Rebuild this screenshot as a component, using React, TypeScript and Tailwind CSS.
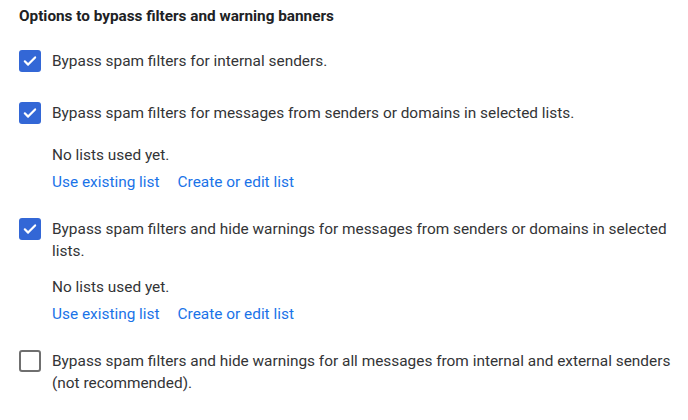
import React, { useState } from 'react';

const font = { fontFamily: 'Roboto, "Liberation Sans", Arial, sans-serif' };

const Checkbox: React.FC<{ checked: boolean; onToggle: () => void }> = ({ checked, onToggle }) => (
    <button
        onClick={onToggle}
        className={`shrink-0 w-[22px] h-[22px] rounded-[3px] flex items-center justify-center ${checked ? 'bg-[#3367d6]' : 'border-2 border-[#6f6f6f] bg-white'}`}
    >
        {checked && (
            <svg width="16" height="16" viewBox="0 0 16 16" fill="none">
                <path d="M2.8 8.3l3.3 3.3 7-7.2" stroke="white" strokeWidth="2.2" strokeLinecap="round" strokeLinejoin="round" />
            </svg>
        )}
    </button>
);

const ListLinks: React.FC<{ className?: string }> = ({ className }) => (
    <div className={`pl-[52px] ${className ?? ''}`}>
        <p className="text-[15.4px] leading-[22px] text-[#333436]">No lists used yet.</p>
        <div className="flex gap-[18px] mt-[5px] text-[15.4px] leading-[22px] text-[#1a73e8]">
            <a href="#" className="hover:underline">Use existing list</a>
            <a href="#" className="hover:underline">Create or edit list</a>
        </div>
    </div>
);

const App: React.FC = () => {
    const [opts, setOpts] = useState([true, true, true, false]);
    const toggle = (i: number) => setOpts(o => o.map((v, j) => (j === i ? !v : v)));

    const Row = ({ i, text, className }: { i: number; text: string; className: string }) => (
        <div className={`flex items-start gap-[11px] pl-[19px] pr-[16px] ${className}`}>
            <Checkbox checked={opts[i]} onToggle={() => toggle(i)} />
            <span className="text-[15.4px] leading-[22px] text-[#333436]">{text}</span>
        </div>
    );

    return (
        <div className="w-[688px] h-[420px] bg-white pt-[6px]" style={font}>
            <h3 className="pl-[19px] text-[15.3px] leading-[20px] font-bold text-[#202124]">
                Options to bypass filters and warning banners
            </h3>

            <Row i={0} className="mt-[24px]" text="Bypass spam filters for internal senders." />
            <Row i={1} className="mt-[30px]" text="Bypass spam filters for messages from senders or domains in selected lists." />
            <ListLinks className="mt-[20px]" />

            <Row i={2} className="mt-[25px]" text="Bypass spam filters and hide warnings for messages from senders or domains in selected lists." />
            <ListLinks className="mt-[14px]" />

            <Row i={3} className="mt-[25px]" text="Bypass spam filters and hide warnings for all messages from internal and external senders (not recommended)." />
        </div>
    );
};

export default App;
